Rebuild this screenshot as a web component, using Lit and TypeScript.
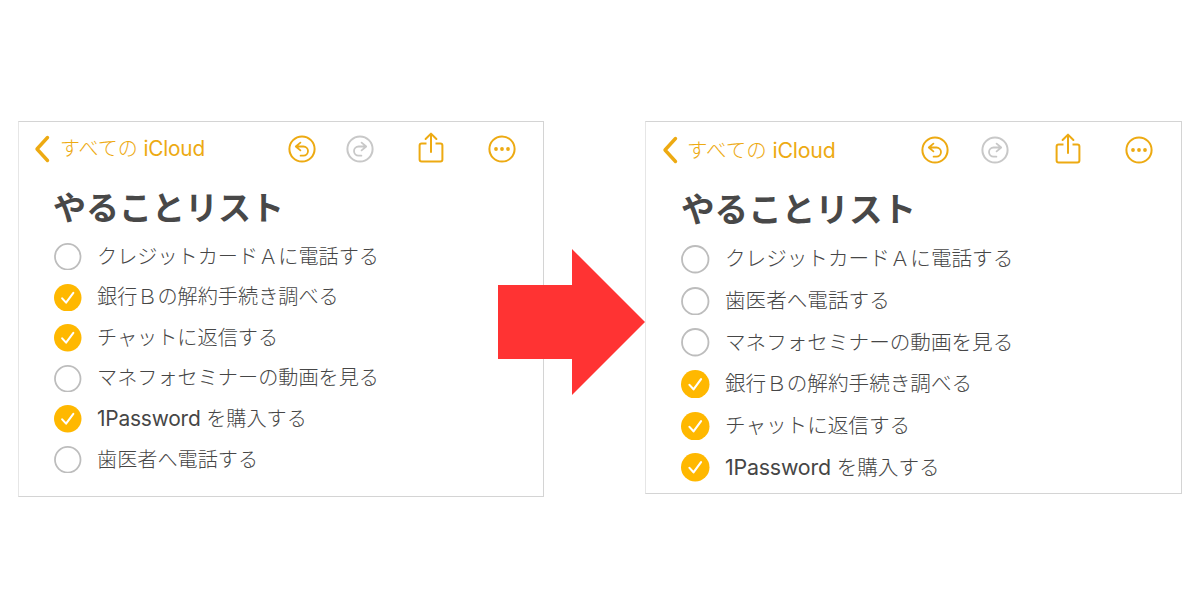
import { LitElement, html, css, svg } from "lit";
import { customElement } from "lit/decorators.js";

const back = svg`<path d="M14.5 2.5 4 14l10.5 11.5" fill="none" stroke="#edaa12" stroke-width="3.4" stroke-linecap="round" stroke-linejoin="round"/>`;

const undoIcon = (c: string) => svg`<circle cx="14" cy="14" r="12.6" fill="none" stroke="${c}" stroke-width="2"/><path d="M12.4 7.6 7.8 11.5l4.6 3.9M8 11.5h7.4a4.6 4.6 0 0 1 0 9.2h-2.8" fill="none" stroke="${c}" stroke-width="1.8" stroke-linecap="round" stroke-linejoin="round"/>`;
const redoIcon = (c: string) => svg`<circle cx="14" cy="14" r="12.6" fill="none" stroke="${c}" stroke-width="2"/><path d="M15.6 7.6 20.2 11.5l-4.6 3.9M20 11.5h-7.4a4.6 4.6 0 0 0 0 9.2h2.8" fill="none" stroke="${c}" stroke-width="1.8" stroke-linecap="round" stroke-linejoin="round"/>`;
const share = svg`<path d="M8.5 11.5H3.6a2 2 0 0 0-2 2v14a2 2 0 0 0 2 2h18.8a2 2 0 0 0 2-2v-14a2 2 0 0 0-2-2h-4.9" fill="none" stroke="#edaa12" stroke-width="2"/><path d="M13 20V1.8M7.6 7 13 1.6 18.4 7" fill="none" stroke="#edaa12" stroke-width="2" stroke-linecap="round" stroke-linejoin="round"/>`;
const more = svg`<circle cx="14" cy="14" r="12.6" fill="none" stroke="#edaa12" stroke-width="2"/><circle cx="8" cy="14" r="1.9" fill="#edaa12"/><circle cx="14" cy="14" r="1.9" fill="#edaa12"/><circle cx="20" cy="14" r="1.9" fill="#edaa12"/>`;

const row = (text: unknown, done: boolean) => html`
  <li class="row">
    ${done
      ? html`<svg class="mark" viewBox="0 0 28 28"><circle cx="14" cy="14" r="14" fill="#ffb800"/><path d="M8.3 14.6l4 4.4 7.4-10" fill="none" stroke="#fff" stroke-width="2.1" stroke-linecap="round" stroke-linejoin="round"/></svg>`
      : html`<svg class="mark" viewBox="0 0 28 28"><circle cx="14" cy="14" r="13" fill="none" stroke="#bdbdbd" stroke-width="1.8"/></svg>`}
    <span class="label">${text}</span>
  </li>`;

const onePassword = html`<span class="latin">1Password</span> を購入する`;

const panel = (cls: string, items: [unknown, boolean][]) => html`
  <section class="panel ${cls}">
    <header class="bar">
      <svg class="chev" viewBox="0 0 18 28">${back}</svg>
      <span class="backlabel">すべての <span class="latin">iCloud</span></span>
      <div class="tools">
        <svg class="ic undo" viewBox="0 0 28 28">${undoIcon("#edaa12")}</svg>
        <svg class="ic redo" viewBox="0 0 28 28">${redoIcon("#c8c8c8")}</svg>
        <svg class="sh" viewBox="0 0 26 31">${share}</svg>
        <svg class="ic more" viewBox="0 0 28 28">${more}</svg>
      </div>
    </header>
    <h1>やることリスト</h1>
    <ul>${items.map(([t, d]) => row(t, d))}</ul>
  </section>`;

@customElement("app-root")
export class AppRoot extends LitElement {
  static styles = css`
    :host {
      display: block;
      position: relative;
      width: 1200px;
      height: 600px;
      background: #fff;
      overflow: hidden;
      font-family: "Inter", "Noto Sans CJK JP", sans-serif;
      color: #555;
    }
    .page {
      display: flex;
      align-items: flex-start;
      gap: 101px;
      padding: 121px 0 0 18px;
    }
    .panel {
      box-sizing: border-box;
      border: 1px solid #d4d4d4;
      border-left-color: #e6e6e6;
      background: #fff;
    }
    .left { width: 526px; height: 376px; }
    .right { width: 537px; height: 373px; }
    .bar {
      display: flex;
      align-items: center;
      height: 28px;
      margin-top: 13px;
      padding-left: 14px;
    }
    .right .bar { margin-top: 14px; padding-left: 15px; }
    .chev { width: 18px; height: 28px; flex: none; }
    .backlabel {
      margin-left: 9px;
      font-size: 20px;
      font-weight: 300;
      line-height: 28px;
      color: #edaa12;
      white-space: nowrap;
    }
    .right .backlabel { margin-left: 8px; font-size: 20.5px; }
    .latin { font-weight: 400; font-size: 1.04em; letter-spacing: -0.01em; }
    .tools { display: flex; align-items: center; margin-left: auto; }
    .left .tools { padding-right: 27px; }
    .right .tools { padding-right: 28px; }
    .ic { width: 28px; height: 28px; flex: none; }
    .sh { width: 26px; height: 31px; flex: none; margin-top: -4px; }
    .left .redo { margin-left: 30px; }
    .left .sh { margin-left: 44px; }
    .left .more { margin-left: 44px; }
    .right .redo { margin-left: 32px; }
    .right .sh { margin-left: 46px; }
    .right .more { margin-left: 44px; }
    h1 {
      margin: 21px 0 0 34px;
      font-size: 33px;
      font-weight: 700;
      line-height: 48px;
      color: #484848;
    }
    .right h1 { font-size: 33.6px; margin: 22px 0 0 35px; }
    ul { list-style: none; margin: 0; padding: 0 0 0 35px; }
    .left ul { margin-top: 4.4px; }
    .right ul { margin-top: 4.6px; padding-left: 35px; }
    .row { display: flex; align-items: center; height: 40.6px; }
    .right .row { height: 41.6px; }
    .mark { flex: none; }
    .left .mark { width: 27.5px; height: 27.5px; }
    .right .mark { width: 28.5px; height: 28.5px; }
    .label {
      font-size: 20.15px;
      font-weight: 300;
      line-height: 28px;
      color: #464646;
      white-space: nowrap;
    }
    .left .label { margin-left: 15.5px; }
    .right .label { margin-left: 15.5px; font-size: 20.6px; }
    .arrow { position: absolute; left: 498px; top: 249px; width: 148px; height: 146px; }
  `;

  render() {
    return html`
      <div class="page">
        ${panel("left", [
          ["クレジットカードＡに電話する", false],
          ["銀行Ｂの解約手続き調べる", true],
          ["チャットに返信する", true],
          ["マネフォセミナーの動画を見る", false],
          [onePassword, true],
          ["歯医者へ電話する", false],
        ])}
        ${panel("right", [
          ["クレジットカードＡに電話する", false],
          ["歯医者へ電話する", false],
          ["マネフォセミナーの動画を見る", false],
          ["銀行Ｂの解約手続き調べる", true],
          ["チャットに返信する", true],
          [onePassword, true],
        ])}
      </div>
      <svg class="arrow" viewBox="0 0 148 146"><path d="M0 36h74V0l73 73-73 73v-36H0z" fill="#ff3333"/></svg>
    `;
  }
}
